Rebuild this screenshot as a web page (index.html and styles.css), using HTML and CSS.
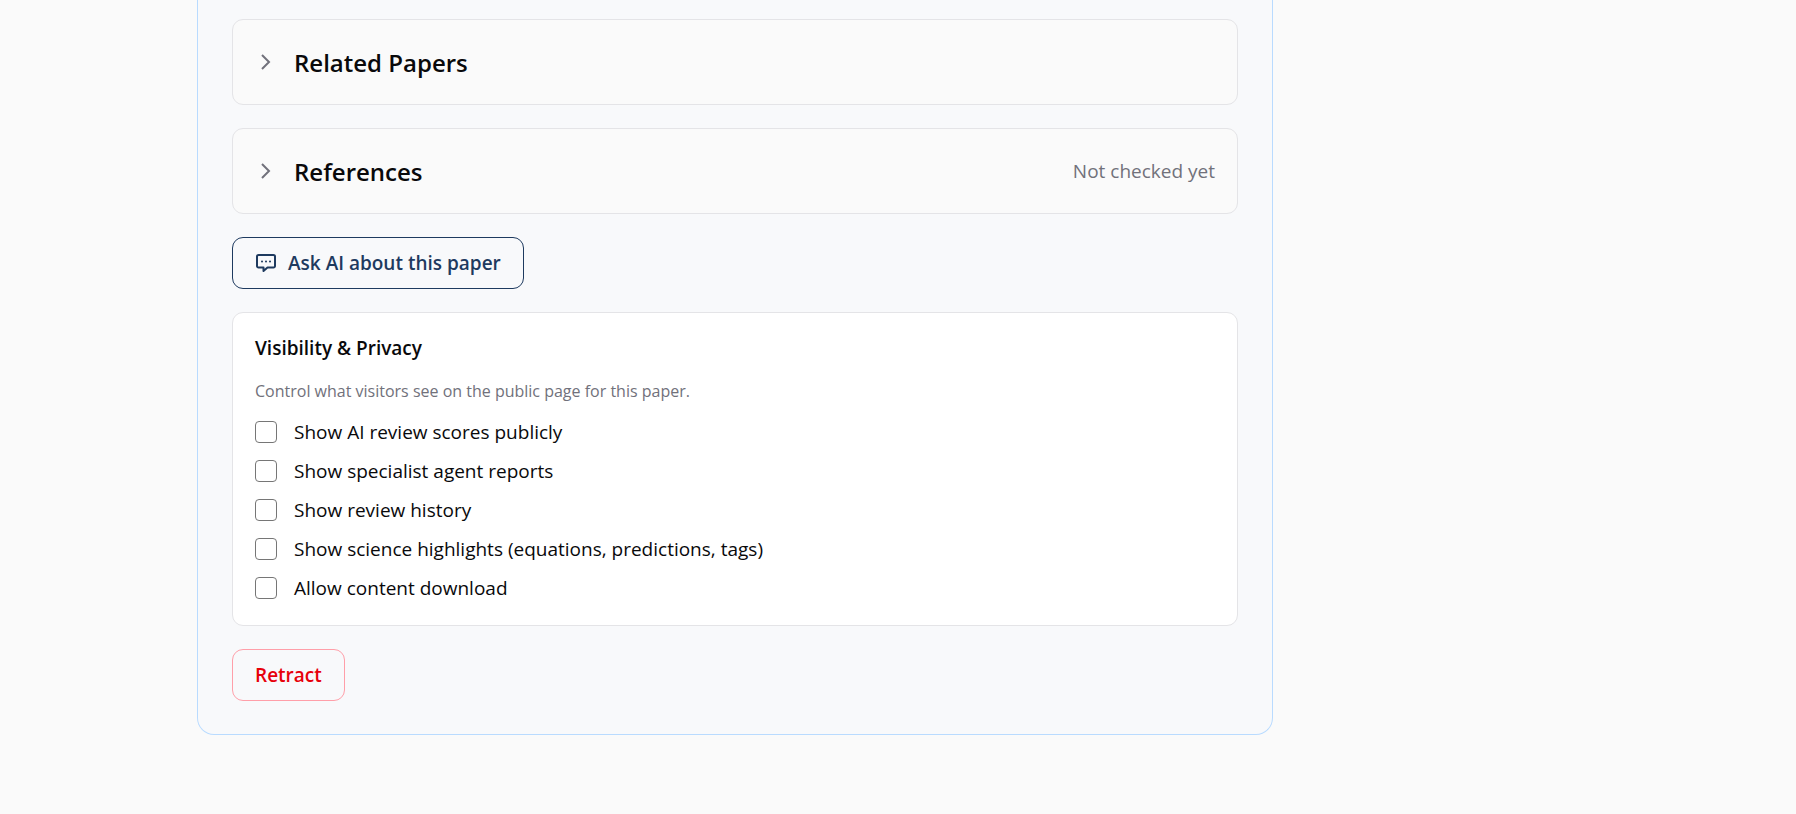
FILE: index.html
```
<!DOCTYPE html>
<html lang="en">

<head>
    <meta charset="UTF-8">
    <meta name="viewport" content="width=device-width, initial-scale=1.0">
    <title>Paper</title>
    <link rel="stylesheet" href="styles.css">
</head>

<body>
    <div class="layout">
        <main class="panel">
            <button type="button" class="section">
                <svg class="chevron" viewBox="0 0 22 22" aria-hidden="true">
                    <path d="M7 4l7 7-7 7" />
                </svg>
                <span class="section-title">Related Papers</span>
            </button>

            <button type="button" class="section">
                <svg class="chevron" viewBox="0 0 22 22" aria-hidden="true">
                    <path d="M7 4l7 7-7 7" />
                </svg>
                <span class="section-title">References</span>
                <span class="section-status">Not checked yet</span>
            </button>

            <button type="button" class="btn btn-ask">
                <svg class="chat-icon" viewBox="0 0 22 22" aria-hidden="true">
                    <path d="M3.500 3h15a1.500 1.500 0 0 1 1.500 1.500v9.500a1.500 1.500 0 0 1-1.500 1.500h-6L8.500 19v-3.500h-5A1.500 1.500 0 0 1 2 14V4.500A1.500 1.500 0 0 1 3.500 3z" />
                    <path class="dots" d="M7 9.500h.01M11 9.500h.01M15 9.500h.01" />
                </svg>
                Ask AI about this paper
            </button>

            <section class="privacy">
                <h2>Visibility &amp; Privacy</h2>
                <p>Control what visitors see on the public page for this paper.</p>
                <div class="options">
                    <label><input type="checkbox">Show AI review scores publicly</label>
                    <label><input type="checkbox">Show specialist agent reports</label>
                    <label><input type="checkbox">Show review history</label>
                    <label><input type="checkbox">Show science highlights (equations, predictions, tags)</label>
                    <label><input type="checkbox">Allow content download</label>
                </div>
            </section>

            <button type="button" class="btn btn-retract">Retract</button>
        </main>
    </div>
</body>

</html>
```
FILE: styles.css
```
* {
    box-sizing: border-box;
}

body {
    margin: 0;
    background: #fafafa;
    color: #09090b;
    font-family: "Segoe UI", "Open Sans", "Noto Sans", sans-serif;
    font-size: 19px;
    line-height: 26px;
}

button {
    font: inherit;
    color: inherit;
    cursor: pointer;
}

.layout {
    display: grid;
    grid-template-columns: minmax(0, 1fr) 280px;
    gap: 46px;
    max-width: 1402px;
    margin: 0 auto;
}

.panel {
    display: flex;
    flex-direction: column;
    align-items: flex-start;
    gap: 23px;
    padding: 19px 34px 33px;
    border: 1px solid #b9dbff;
    border-top: 0;
    border-radius: 0 0 17px 17px;
    background: #f8f9fb;
}

.section {
    display: flex;
    align-items: center;
    gap: 17px;
    width: 100%;
    height: 86px;
    padding: 0 22px;
    border: 1px solid #e4e4e7;
    border-radius: 11px;
    background: #fafafa;
    text-align: left;
}

.section-title {
    padding-top: 2px;
    font-size: 24px;
    font-weight: 600;
}

.section-status {
    margin-left: auto;
    color: #71717b;
}

.chevron,
.chat-icon {
    flex: none;
    width: 22px;
    height: 22px;
    fill: none;
    stroke: #71717b;
    stroke-width: 2;
}

.chat-icon {
    stroke: #1e3a5f;
    stroke-linejoin: round;
}

.dots {
    stroke-linecap: round;
}

.btn {
    display: flex;
    align-items: center;
    gap: 11px;
    height: 52px;
    padding: 0 22px;
    border: 1px solid;
    border-radius: 11px;
    background: transparent;
    font-weight: 600;
}

.btn-ask {
    border-color: #1e3a5f;
    color: #1e3a5f;
}

.btn-retract {
    border-color: #ff9fa9;
    color: #e7000b;
}

.privacy {
    width: 100%;
    padding: 22px 22px 24px;
    border: 1px solid #e4e4e7;
    border-radius: 11px;
    background: #fff;
}

.privacy h2 {
    margin: 0 0 17px;
    font-size: 19px;
    font-weight: 600;
}

.privacy p {
    margin: 0 0 15px;
    color: #71717b;
    font-size: 16px;
    line-height: 26px;
}

.options {
    display: grid;
    gap: 13px;
}

.options label {
    display: flex;
    align-items: center;
    gap: 17px;
    justify-self: start;
}

.options input {
    appearance: none;
    width: 22px;
    height: 22px;
    margin: 0;
    border: 1px solid #767676;
    border-radius: 4px;
    background: #fff;
}

.options input:checked {
    background: #1e3a5f;
}
```
